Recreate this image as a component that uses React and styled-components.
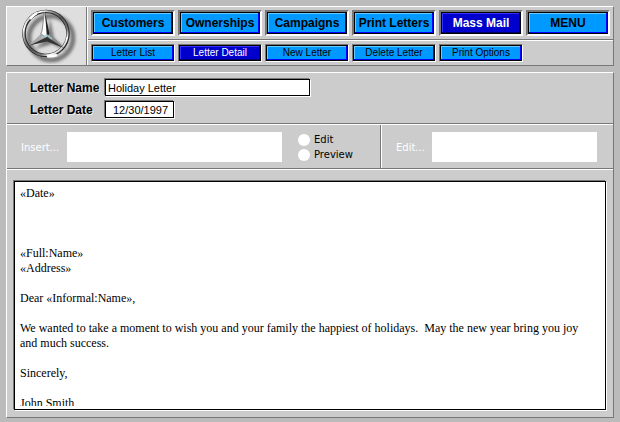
import React, { useState } from "react";
import styled, { createGlobalStyle } from "styled-components";

const GlobalStyle = createGlobalStyle`
  * {
    box-sizing: border-box;
  }

  body {
    margin: 0;
    background: #bbb;
    color: #000;
    font-family: "Liberation Sans", Arial, sans-serif;
    font-size: 11px;
  }
`;

const Page = styled.div`
  display: flex;
  flex-direction: column;
  gap: 6px;
  min-height: 100vh;
  padding: 6px 6px 4px;
`;

const Panel = styled.div`
  display: flex;
  flex-direction: ${props => props.$direction};
  flex: ${props => (props.$grow ? "1" : "none")};
  background: #ccc;
  border: 1px solid;
  border-color: #fff #777 #777 #fff;
`;

const LogoCell = styled.div`
  display: flex;
  align-items: center;
  justify-content: center;
  width: 80px;
  background: #dedede;
  border-right: 1px solid #777;
`;

const Menus = styled.div`
  flex: 1;
  border-left: 1px solid #fff;
`;

const MenuRow = styled.nav`
  display: grid;
  grid-template-columns: repeat(6, 1fr);
  gap: 3px;
  padding: 3px;
  border-bottom: ${props => (props.$divided ? "1px solid #777" : "none")};
  border-top: ${props => (props.$divided ? "none" : "1px solid #fff")};
`;

const MenuButton = styled.button`
  height: 26px;
  padding: 0;
  border: 2px solid;
  border-color: #777 #fff #fff #777;
  background: ${props => (props.$active ? "#00c" : "#09f")};
  box-shadow: inset 0 0 0 1px #000,
    inset -2px -2px 0 ${props => (props.$active ? "#006" : "#00f")},
    inset 2px 2px 0 ${props => (props.$active ? "#33f" : "#6cf")};
  color: ${props => (props.$active ? "#fff" : "#000")};
  font-family: inherit;
  font-size: 12px;
  font-weight: 700;
  line-height: 14px;
  white-space: nowrap;
`;

const SubMenuButton = styled(MenuButton)`
  height: 18px;
  border-width: 1px;
  font-size: 10px;
  font-weight: 400;
  line-height: 12px;
`;

const Fields = styled.div`
  display: grid;
  grid-template-columns: 70px 1fr;
  align-items: center;
  gap: 5px;
  padding: 6px 23px 5px;
  border-bottom: 1px solid #777;
`;

const FieldLabel = styled.label`
  font-size: 12px;
  font-weight: 700;
  line-height: 14px;
  white-space: nowrap;
  text-shadow: 1px 1px 0 #eee;
`;

const TextInput = styled.input`
  width: ${props => props.$width};
  height: 17px;
  padding: 0;
  border: 1px solid #000;
  border-radius: 0;
  outline: none;
  background: #fff;
  box-shadow: -1px -1px 0 #777, 1px 1px 0 #fff;
  font-family: inherit;
  font-size: 11px;
  line-height: 13px;
  text-indent: ${props => (props.$inset ? "7px" : "2px")};
`;

const Tools = styled.div`
  display: grid;
  grid-template-columns: 374fr 232fr;
  border-top: 1px solid #fff;
  border-bottom: 1px solid #777;
`;

const ToolGroup = styled.div`
  display: flex;
  align-items: center;
  min-width: 0;
  padding: 7px 16px 6px 14px;
  border-left: ${props => (props.$divided ? "1px solid #fff" : "none")};
  border-right: ${props => (props.$divided ? "none" : "1px solid #777")};
  font-family: "DejaVu Sans", sans-serif;
  font-size: 10px;
  line-height: 15px;
`;

const ToolLabel = styled.label`
  flex: none;
  width: ${props => props.$width};
  color: #fff;
`;

const ToolSelect = styled.select`
  flex: 1;
  min-width: 0;
  height: 30px;
  border: none;
  border-radius: 0;
  appearance: none;
  background: #fff;
`;

const Modes = styled.div`
  width: 82px;
  padding-left: 16px;
`;

const Mode = styled.label`
  display: flex;
  align-items: center;
  gap: 4px;
`;

const Radio = styled.input`
  width: 12px;
  height: 12px;
  margin: 0;
  border-radius: 50%;
  appearance: none;
  background: #fff;

  &:checked {
    box-shadow: inset 0 0 0 3px #fff, inset 0 0 0 6px #000;
  }
`;

const LetterArea = styled.div`
  display: flex;
  flex: 1;
  padding: 11px 7px 7px;
  border-top: 1px solid #fff;
`;

const LetterFrame = styled.div`
  display: flex;
  flex: 1;
  padding: 4px 14px 3px 5px;
  border: 1px solid #000;
  background: #fff;
  box-shadow: -1px -1px 0 #777, 1px 1px 0 #fff;
`;

const LetterText = styled.textarea`
  flex: 1;
  min-height: 160px;
  padding: 0;
  border: none;
  outline: none;
  resize: none;
  overflow: hidden;
  background: #fff;
  font-family: "Liberation Serif", "Times New Roman", serif;
  font-size: 12px;
  line-height: 15px;
`;

const menu = ["Customers", "Ownerships", "Campaigns", "Print Letters", "Mass Mail", "MENU"];
const subMenu = ["Letter List", "Letter Detail", "New Letter", "Delete Letter", "Print Options"];

const letter = `«Date»



«Full:Name»
«Address»

Dear «Informal:Name»,

We wanted to take a moment to wish you and your family the happiest of holidays.  May the new year bring you joy and much success.

Sincerely,

John Smith`;

const Logo = () => (
  <svg width="62" height="56" viewBox="0 0 62 56" role="img" aria-label="Star logo">
    <defs>
      <linearGradient id="chrome" x1="0" y1="0" x2="1" y2="1">
        <stop offset="0" stopColor="#777" />
        <stop offset="0.2" stopColor="#fff" />
        <stop offset="0.32" stopColor="#999" />
        <stop offset="0.5" stopColor="#555" />
        <stop offset="0.7" stopColor="#777" />
        <stop offset="0.8" stopColor="#fff" />
        <stop offset="1" stopColor="#666" />
      </linearGradient>
      <filter id="soft" x="-20%" y="-20%" width="140%" height="140%">
        <feGaussianBlur stdDeviation="1.5" />
      </filter>
    </defs>
    <g filter="url(#soft)" opacity="0.6" transform="translate(5 4)">
      <circle cx="30" cy="26" r="22" fill="none" stroke="#333" strokeWidth="5" />
      <path d="M29 6L33 26L46 39L31 32L14 37L26 26Z" fill="#333" />
    </g>
    <circle cx="30" cy="25.5" r="22" fill="none" stroke="#2b2b2b" strokeWidth="3.6" />
    <circle cx="29.6" cy="25.2" r="22" fill="none" stroke="url(#chrome)" strokeWidth="1.8" />
    <path d="M41 47A22 22 0 0 1 31 48" fill="none" stroke="#fff" strokeWidth="2.6" />
    <path d="M14 11A22 22 0 0 1 21 5" fill="none" stroke="#fff" strokeWidth="2.4" />
    <path d="M28.5 4L25.5 26L31 30Z" fill="#fff" />
    <path d="M28.5 4L26 23L24.5 26.5" fill="none" stroke="#777" strokeWidth="0.8" />
    <path d="M29 4L33.5 26L31 30Z" fill="#222" />
    <path d="M25.5 25.5L13 37L31 29.5Z" fill="#aaa" />
    <path d="M13 37.5L31 33.5V29Z" fill="#333" />
    <path d="M33.5 25.5L48 39.5L31 29Z" fill="#888" />
    <path d="M31 29L48 40L31 33.5Z" fill="#333" />
    <path d="M25 30L31 27L36 31" fill="none" stroke="#9cc" strokeWidth="1.2" />
  </svg>
);

const App = () => {
  const [mode, setMode] = useState("");
  const [text, setText] = useState(letter);

  return (
    <>
      <GlobalStyle />
      <Page>
        <Panel $direction="row">
          <LogoCell>
            <Logo />
          </LogoCell>
          <Menus>
            <MenuRow $divided>
              {menu.map(item => (
                <MenuButton key={item} $active={item === "Mass Mail"}>
                  {item}
                </MenuButton>
              ))}
            </MenuRow>
            <MenuRow>
              {subMenu.map(item => (
                <SubMenuButton key={item} $active={item === "Letter Detail"}>
                  {item}
                </SubMenuButton>
              ))}
            </MenuRow>
          </Menus>
        </Panel>
        <Panel $direction="column" $grow>
          <Fields>
            <FieldLabel htmlFor="name">Letter Name</FieldLabel>
            <TextInput id="name" $width="205px" defaultValue="Holiday Letter" />
            <FieldLabel htmlFor="date">Letter Date</FieldLabel>
            <TextInput id="date" $width="69px" $inset defaultValue="12/30/1997" />
          </Fields>
          <Tools>
            <ToolGroup>
              <ToolLabel htmlFor="insert" $width="46px">
                Insert...
              </ToolLabel>
              <ToolSelect id="insert" />
              <Modes>
                {["Edit", "Preview"].map(item => (
                  <Mode key={item}>
                    <Radio
                      type="radio"
                      name="mode"
                      checked={mode === item}
                      onChange={() => setMode(item)}
                    />
                    {item}
                  </Mode>
                ))}
              </Modes>
            </ToolGroup>
            <ToolGroup $divided>
              <ToolLabel htmlFor="edit" $width="36px">
                Edit...
              </ToolLabel>
              <ToolSelect id="edit" />
            </ToolGroup>
          </Tools>
          <LetterArea>
            <LetterFrame>
              <LetterText
                aria-label="Letter text"
                value={text}
                onChange={e => setText(e.target.value)}
              />
            </LetterFrame>
          </LetterArea>
        </Panel>
      </Page>
    </>
  );
};

export default App;
